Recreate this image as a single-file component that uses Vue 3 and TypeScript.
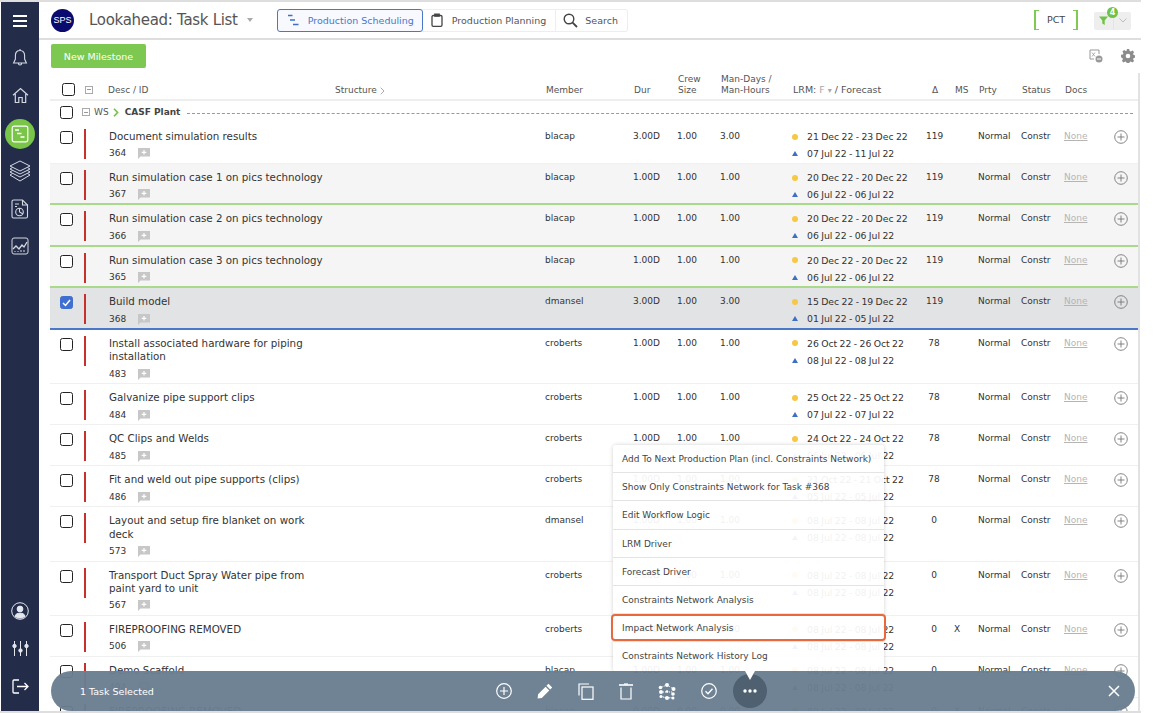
<script setup lang="ts">
interface Task {
  title: string
  id: number
  member: string
  dur: string
  crew: string
  man: string
  lrm: string
  fc: string
  delta: number
  ms?: string
  tone?: 'soft' | 'picked'
}

const tasks: Task[] = [
  { title: 'Document simulation results', id: 364, member: 'blacap', dur: '3.00D', crew: '1.00', man: '3.00', lrm: '21 Dec 22 - 23 Dec 22', fc: '07 Jul 22 - 11 Jul 22', delta: 119 },
  { title: 'Run simulation case 1 on pics technology', id: 367, member: 'blacap', dur: '1.00D', crew: '1.00', man: '1.00', lrm: '20 Dec 22 - 20 Dec 22', fc: '06 Jul 22 - 06 Jul 22', delta: 119, tone: 'soft' },
  { title: 'Run simulation case 2 on pics technology', id: 366, member: 'blacap', dur: '1.00D', crew: '1.00', man: '1.00', lrm: '20 Dec 22 - 20 Dec 22', fc: '06 Jul 22 - 06 Jul 22', delta: 119, tone: 'soft' },
  { title: 'Run simulation case 3 on pics technology', id: 365, member: 'blacap', dur: '1.00D', crew: '1.00', man: '1.00', lrm: '20 Dec 22 - 20 Dec 22', fc: '06 Jul 22 - 06 Jul 22', delta: 119, tone: 'soft' },
  { title: 'Build model', id: 368, member: 'dmansel', dur: '3.00D', crew: '1.00', man: '3.00', lrm: '15 Dec 22 - 19 Dec 22', fc: '01 Jul 22 - 05 Jul 22', delta: 119, tone: 'picked' },
  { title: 'Install associated hardware for piping installation', id: 483, member: 'croberts', dur: '1.00D', crew: '1.00', man: '1.00', lrm: '26 Oct 22 - 26 Oct 22', fc: '08 Jul 22 - 08 Jul 22', delta: 78 },
  { title: 'Galvanize pipe support clips', id: 484, member: 'croberts', dur: '1.00D', crew: '1.00', man: '1.00', lrm: '25 Oct 22 - 25 Oct 22', fc: '07 Jul 22 - 07 Jul 22', delta: 78 },
  { title: 'QC Clips and Welds', id: 485, member: 'croberts', dur: '1.00D', crew: '1.00', man: '1.00', lrm: '24 Oct 22 - 24 Oct 22', fc: '06 Jul 22 - 06 Jul 22', delta: 78 },
  { title: 'Fit and weld out pipe supports (clips)', id: 486, member: 'croberts', dur: '1.00D', crew: '1.00', man: '1.00', lrm: '21 Oct 22 - 21 Oct 22', fc: '05 Jul 22 - 05 Jul 22', delta: 78 },
  { title: 'Layout and setup fire blanket on work deck', id: 573, member: 'dmansel', dur: '1.00D', crew: '1.00', man: '1.00', lrm: '08 Jul 22 - 08 Jul 22', fc: '08 Jul 22 - 08 Jul 22', delta: 0 },
  { title: 'Transport Duct Spray Water pipe from paint yard to unit', id: 567, member: 'croberts', dur: '1.00D', crew: '1.00', man: '1.00', lrm: '08 Jul 22 - 08 Jul 22', fc: '08 Jul 22 - 08 Jul 22', delta: 0 },
  { title: 'FIREPROOFING REMOVED', id: 506, member: 'croberts', dur: '1.00D', crew: '1.00', man: '1.00', lrm: '08 Jul 22 - 08 Jul 22', fc: '08 Jul 22 - 08 Jul 22', delta: 0, ms: 'X' },
  { title: 'Demo Scaffold', id: 494, member: 'blacap', dur: '1.00D', crew: '1.00', man: '1.00', lrm: '08 Jul 22 - 08 Jul 22', fc: '08 Jul 22 - 08 Jul 22', delta: 0 },
  { title: 'FIREPROOFING REMOVED', id: 507, member: 'blacap', dur: '0.00D', crew: '0.00', man: '0.00', lrm: '08 Jul 22 - 08 Jul 22', fc: '08 Jul 22 - 08 Jul 22', delta: 0, ms: 'X' }
]

const menuItems = [
  'Add To Next Production Plan (incl. Constraints Network)',
  'Show Only Constraints Network for Task #368',
  'Edit Workflow Logic',
  'LRM Driver',
  'Forecast Driver',
  'Constraints Network Analysis',
  'Impact Network Analysis',
  'Constraints Network History Log'
]
</script>

<template>
  <div class="page">
    <aside class="sidebar">
      <div class="side-item">
        <svg width="16" height="14" viewBox="0 0 16 14" fill="none" stroke="#fff" stroke-width="2"><path d="M1 2h14M1 7h14M1 12h14" /></svg>
      </div>
      <div class="side-item">
        <svg width="16" height="20" viewBox="0 0 16 20" fill="none" stroke="#d5d9e2" stroke-width="1.1"><path d="M8 2.500c-3 0-4.600 2.200-4.600 5v3.600L1.600 15h12.800l-1.800-3.900V7.500c0-2.800-1.600-5-4.600-5zM8 1v1.500M6.400 15.500c0 2 3.200 2 3.200 0" /></svg>
      </div>
      <div class="side-item">
        <svg width="17" height="17" viewBox="0 0 17 17" fill="none" stroke="#d5d9e2" stroke-width="1.200"><path d="M1 8.200 8.500 1.500 16 8.200M3.300 7v8.500h3.500v-5h3.400v5h3.500V7" /></svg>
      </div>
      <div class="side-item">
        <span class="side-active">
          <svg width="18" height="18" viewBox="0 0 18 18" fill="none" stroke="#fff"><rect x="1.200" y="1.200" width="15.600" height="15.600" rx="2" stroke-width="1.200" /><path d="M4 5h4M6 8.500h4.500M9.500 12h4" stroke-width="1.700" /></svg>
        </span>
      </div>
      <div class="side-item">
        <svg width="22" height="23" viewBox="0 0 22 23" fill="none" stroke="#d5d9e2" stroke-width="1"><path d="M11 1 21 6l-10 5L1 6zM3.500 7.500 1 9l10 5 10-5-2.500-1.500M3.500 10.500 1 12l10 5 10-5-2.500-1.500M3.500 13.500 1 15l10 6 10-6-2.500-1.500" /></svg>
      </div>
      <div class="side-item">
        <svg width="18" height="20" viewBox="0 0 18 20" fill="none" stroke="#d5d9e2" stroke-width="1.100"><path d="M2.500 1h9l5 5v11.500a1.500 1.500 0 0 1-1.500 1.500H2.500A1.500 1.500 0 0 1 1 17.500V2.500A1.500 1.500 0 0 1 2.500 1z" /><path d="M11.500 1v5h5M4 5h4M4 7.500h2" /><circle cx="8.500" cy="13" r="3.800" /><path d="M8.500 13V9.200M8.500 13l3.200 1.800" /></svg>
      </div>
      <div class="side-item">
        <svg width="18" height="18" viewBox="0 0 18 18" fill="none" stroke="#d5d9e2" stroke-width="1"><rect x="1" y="1" width="16" height="16" rx="2" /><path d="M2 12l3-3 3 3 3-4 2 2 3-5" stroke-width="1.300" /><path d="M4 15v-1M7 15v-1M10 15v-2M13 15v-2" /></svg>
      </div>
      <div class="side-spacer"></div>
      <div class="side-item">
        <svg width="18" height="18" viewBox="0 0 18 18" fill="none" stroke="#e4e7ee" stroke-width="1"><circle cx="9" cy="9" r="8.300" /><circle cx="9" cy="7" r="2.900" fill="#e4e7ee" /><path d="M4 14.200c.5-2.500 3-3 5-3s4.500.5 5 3c-1.500 1.300-3 1.800-5 1.800s-3.500-.5-5-1.800z" fill="#e4e7ee" /></svg>
      </div>
      <div class="side-item">
        <svg width="17" height="17" viewBox="0 0 17 17" fill="none" stroke="#e4e7ee" stroke-width="1"><path d="M2.500 1v15M8.500 1v15M14.500 1v15" /><circle cx="2.500" cy="6" r="1.700" fill="#e4e7ee" /><circle cx="8.500" cy="10.500" r="1.700" fill="#e4e7ee" /><circle cx="14.500" cy="6" r="1.700" fill="#e4e7ee" /></svg>
      </div>
      <div class="side-item">
        <svg width="17" height="15" viewBox="0 0 17 15" fill="none" stroke="#fff" stroke-width="1.300"><path d="M7 1H2a1 1 0 0 0-1 1v11a1 1 0 0 0 1 1h5M5 7.500h11M12.500 4l3.500 3.500-3.500 3.500" /></svg>
      </div>
    </aside>

    <main class="main">
      <header class="topbar">
        <span class="logo">SPS</span>
        <h1 class="page-title">Lookahead: Task List</h1>
        <span class="title-caret"></span>
        <nav class="tabs">
          <div class="tab active">
            <svg width="12" height="12" viewBox="0 0 12 12" fill="none" stroke="#3f6fc4" stroke-width="1.400"><path d="M1 1.500h4.500M3 6h5M6 10.500h5.500" /></svg>
            <span>Production Scheduling</span>
          </div>
          <div class="tab">
            <svg width="12" height="14" viewBox="0 0 12 14" fill="none" stroke="#444" stroke-width="1.300"><rect x="1" y="2.500" width="10" height="10.800" rx="1.200" /><path d="M3.800 3.200V1.200h4.400v2z" fill="#444" /></svg>
            <span>Production Planning</span>
          </div>
          <div class="tab">
            <svg width="15" height="15" viewBox="0 0 15 15" fill="none" stroke="#444" stroke-width="1.400"><circle cx="6" cy="6" r="4.800" /><path d="M9.600 9.600 14 14" stroke-width="1.800" /></svg>
            <span>Search</span>
          </div>
        </nav>
        <div class="top-right">
          <div class="pct">PCT</div>
          <div class="filter-btn">
            <svg width="9" height="9" viewBox="0 0 9 9" fill="#6fc243"><path d="M0 .5h9L5.700 4.500V9L3.300 7.600V4.500z" /></svg>
            <span class="filter-badge">4</span>
            <span class="filter-sep"></span>
            <svg width="8" height="5" viewBox="0 0 8 5" fill="none" stroke="#bdbdbd"><path d="M.5.5 4 4 7.500.5" /></svg>
          </div>
        </div>
      </header>

      <div class="actions">
        <button class="milestone">New Milestone</button>
        <div class="action-icons">
          <svg width="14" height="14" viewBox="0 0 14 14" fill="none" stroke="#999" stroke-width="1"><path d="M10 5V1H1v9h4" /><path d="M3 3.500l3 4M6 3.500l-3 4" stroke-width=".8" /><circle cx="10" cy="10" r="3.500" fill="#999" stroke="none" /><path d="M8 10h4" stroke="#fff" /></svg>
          <svg width="14" height="14" viewBox="0 0 14 14" fill="#8c8c8c"><path d="M5.800 0h2.400l.4 1.900 1.200.5 1.600-1 1.700 1.700-1 1.600.5 1.200 1.900.4v2.400l-1.900.4-.5 1.200 1 1.600-1.700 1.700-1.600-1-1.200.5-.4 1.900H5.800l-.4-1.900-1.200-.5-1.600 1-1.700-1.700 1-1.600-.5-1.200L0 8.200V5.800l1.900-.4.500-1.200-1-1.600 1.700-1.700 1.600 1 1.200-.5zM7 4.700a2.300 2.300 0 1 0 0 4.600 2.300 2.300 0 0 0 0-4.600z" /></svg>
        </div>
      </div>

      <section class="table">
        <div class="grid head">
          <div class="head-check"><span class="box"></span><span class="collapse"></span></div>
          <div></div>
          <div class="head-desc">Desc / ID</div>
          <div class="head-structure">Structure
            <svg width="5" height="8" viewBox="0 0 5 8" fill="none" stroke="#aaa"><path d="M.7.7 4 4 .7 7.300" /></svg>
          </div>
          <div>Member</div>
          <div>Dur</div>
          <div>Crew<br />Size</div>
          <div>Man-Days /<br />Man-Hours</div>
          <div class="head-lrm">LRM: <span class="muted">F</span> <span class="mini-caret">▾</span> / Forecast</div>
          <div class="delta">Δ</div>
          <div>MS</div>
          <div>Prty</div>
          <div>Status</div>
          <div>Docs</div>
          <div></div>
        </div>

        <div class="group">
          <span class="box"></span>
          <span class="collapse"></span>
          <span class="ws">WS</span>
          <svg width="6" height="9" viewBox="0 0 6 9" fill="none" stroke="#6fc243" stroke-width="1.600"><path d="M1 .8 4.600 4.500 1 8.200" /></svg>
          <b>CASF Plant</b>
          <span class="dash"></span>
        </div>

        <div v-for="task in tasks" :key="task.id" class="grid row" :class="task.tone">
          <div class="row-check">
            <span class="box" :class="{ checked: task.tone === 'picked' }">
              <svg v-if="task.tone === 'picked'" width="9" height="8" viewBox="0 0 9 8" fill="none" stroke="#fff" stroke-width="1.500"><path d="M1 4l2.500 2.500L8 1" /></svg>
            </span>
          </div>
          <div class="bar-cell"><span class="bar"></span></div>
          <div class="desc">
            <div class="desc-title">{{ task.title }}</div>
            <div class="desc-id">
              {{ task.id }}
              <svg width="12" height="11" viewBox="0 0 12 11"><path d="M0 0h12v8.500H2.500L0 11z" fill="#c7c7c7" /><path d="M6 2v4.600M3.700 4.300h4.600" stroke="#fff" stroke-width="1.200" /></svg>
            </div>
          </div>
          <div></div>
          <div>{{ task.member }}</div>
          <div>{{ task.dur }}</div>
          <div>{{ task.crew }}</div>
          <div>{{ task.man }}</div>
          <div class="dates">
            <div class="date-line"><span class="dot"></span>{{ task.lrm }}</div>
            <div class="date-line"><span class="tri"></span>{{ task.fc }}</div>
          </div>
          <div class="delta">{{ task.delta }}</div>
          <div>{{ task.ms }}</div>
          <div>Normal</div>
          <div>Constr</div>
          <div class="none">None</div>
          <div class="add">
            <svg width="14" height="14" viewBox="0 0 14 14" fill="none" stroke="#777" stroke-width=".9"><circle cx="7" cy="7" r="6.300" /><path d="M7 3.500v7M3.500 7h7" /></svg>
          </div>
        </div>
      </section>

      <div class="menu">
        <div v-for="item in menuItems" :key="item" class="menu-item" :class="{ hot: item === 'Impact Network Analysis' }">{{ item }}</div>
      </div>

      <div class="selection-bar">
        <span class="selected-label">1 Task Selected</span>
        <div class="bar-tools">
          <svg class="tool" width="16" height="16" viewBox="0 0 16 16" fill="none" stroke="#fff" stroke-width="1.200"><circle cx="8" cy="8" r="7.300" /><path d="M8 4v8M4 8h8" /></svg>
          <svg class="tool" width="16" height="16" viewBox="0 0 16 16" fill="#fff"><path d="M11.500.8l3.700 3.700-2 2-3.700-3.700zM8.600 3.700l3.700 3.700-7.500 7.500L.6 15.400l.5-4.200z" /></svg>
          <svg class="tool" width="16" height="17" viewBox="0 0 16 17" fill="none" stroke="#fff" stroke-width="1.200"><path d="M1 12.500V1h10" /><rect x="4" y="4" width="11" height="12.300" /></svg>
          <svg class="tool" width="14" height="17" viewBox="0 0 14 17" fill="none" stroke="#fff" stroke-width="1.200"><path d="M0 2h14" stroke-width="1.600" /><path d="M5 1h4" /><path d="M2 4.500V16h10V4.500" /></svg>
          <svg class="tool" width="18" height="17" viewBox="0 0 18 17" fill="#fff"><circle cx="9" cy="2" r="2" /><circle cx="2.500" cy="4.500" r="1.800" /><circle cx="15.500" cy="6" r="2" /><circle cx="3" cy="9" r="2" /><circle cx="9" cy="8.500" r="1.300" /><circle cx="15" cy="11" r="1.800" /><circle cx="9" cy="15" r="2" /><circle cx="3" cy="13.500" r="1.500" /><circle cx="15" cy="15" r="1.500" /><path d="M2.500 4.500 9 2M3 9h12M3 13.500 9 15h6M15.500 6 9 2" stroke="#fff" stroke-dasharray="1 1" /></svg>
          <svg class="tool" width="16" height="16" viewBox="0 0 16 16" fill="none" stroke="#fff" stroke-width="1.200"><circle cx="8" cy="8" r="7.300" /><path d="M4.500 8.200l2.500 2.500 4.500-5" stroke-width="1.400" /></svg>
          <span class="more-wrap">
            <span class="more">
              <svg width="14" height="4" viewBox="0 0 14 4" fill="#fff"><circle cx="2" cy="2" r="1.700" /><circle cx="7" cy="2" r="1.700" /><circle cx="12" cy="2" r="1.700" /></svg>
            </span>
            <span class="more-arrow"></span>
          </span>
        </div>
        <svg class="close" width="12" height="12" viewBox="0 0 12 12" fill="none" stroke="#fff" stroke-width="1.500"><path d="M1 1l10 10M11 1 1 11" /></svg>
      </div>
    </main>
  </div>
</template>

<style>
html,
body {
  margin: 0;
  background: #fff;
  overflow: hidden;
}
</style>

<style scoped>
.page {
  display: flex;
  width: 1141px;
  height: 713px;
  box-sizing: border-box;
  padding-left: 1px;
  border-top: 2px solid #dedede;
  border-bottom: 2px solid #dedede;
  overflow: hidden;
  font-family: "DejaVu Sans", Verdana, sans-serif;
  font-size: 9px;
  color: #333;
}

.sidebar {
  flex: 0 0 38px;
  display: flex;
  flex-direction: column;
  padding-bottom: 6px;
  box-sizing: border-box;
  background: #232c49;
}

.side-item {
  flex: 0 0 37.600px;
  display: flex;
  align-items: center;
  justify-content: center;
}

.side-spacer {
  flex: 1;
}

.side-active {
  display: flex;
  align-items: center;
  justify-content: center;
  width: 30px;
  height: 30px;
  border-radius: 50%;
  background: #78c548;
}

.main {
  position: relative;
  flex: 1;
  min-width: 0;
}

.topbar {
  display: flex;
  align-items: center;
  height: 36px;
  padding: 0 10px 0 12px;
  border-bottom: 2px solid #dedede;
}

.logo {
  flex: none;
  width: 23px;
  height: 23px;
  border-radius: 50%;
  background: #0b0b6f;
  color: #fff;
  font-family: "Liberation Sans", sans-serif;
  font-size: 9px;
  line-height: 23px;
  text-align: center;
}

.page-title {
  margin: 0 0 0 15px;
  font-size: 15px;
  font-weight: 400;
  color: #555;
  letter-spacing: -0.3px;
}

.title-caret {
  width: 0;
  height: 0;
  margin: 0 24px 0 9px;
  border-left: 3.500px solid transparent;
  border-right: 3.500px solid transparent;
  border-top: 4px solid #aaa;
}

.tabs {
  display: flex;
  height: 23px;
  border: 1px solid #eee;
  border-left: 0;
  border-radius: 3px;
  box-sizing: border-box;
  font-size: 9.500px;
}

.tab {
  display: flex;
  align-items: center;
  gap: 9px;
  padding: 0 9px 0 8px;
  color: #555;
  border-right: 1px solid #eee;
  white-space: nowrap;
}

.tab:last-child {
  gap: 7px;
  padding-left: 7px;
  border-right: 0;
}

.tab.active {
  margin: -1px 0;
  padding: 0 8px 0 9px;
  color: #4a78c8;
  background: #f7f9fe;
  border: 1px solid #4a78c8;
  border-radius: 3px;
}

.top-right {
  display: flex;
  align-items: center;
  margin-left: auto;
}

.pct {
  width: 44px;
  height: 20px;
  line-height: 20px;
  box-sizing: border-box;
  text-align: center;
  color: #444;
  border: solid #7fca54;
  border-width: 0 2px;
  font-size: 9.500px;
  background:
    linear-gradient(#7fca54, #7fca54) left top / 3px 1px no-repeat,
    linear-gradient(#7fca54, #7fca54) left bottom / 3px 1px no-repeat,
    linear-gradient(#7fca54, #7fca54) right top / 3px 1px no-repeat,
    linear-gradient(#7fca54, #7fca54) right bottom / 3px 1px no-repeat;
}

.filter-btn {
  position: relative;
  display: flex;
  align-items: center;
  gap: 5px;
  width: 37px;
  height: 18px;
  margin-left: 16px;
  margin-top: 1px;
  padding-left: 5px;
  box-sizing: border-box;
  background: #eee;
  border-radius: 2px;
}

.filter-badge {
  position: absolute;
  left: 13px;
  top: -5px;
  width: 11px;
  height: 11px;
  border-radius: 50%;
  background: #6fc243;
  color: #fff;
  font-size: 8px;
  font-weight: 700;
  line-height: 11px;
  text-align: center;
}

.filter-sep {
  width: 1px;
  height: 18px;
  background: #e4e4e4;
}

.actions {
  display: flex;
  align-items: center;
  justify-content: space-between;
  height: 24px;
  margin-top: 4px;
  padding: 0 6px 0 12px;
}

.milestone {
  width: 95px;
  height: 24px;
  padding: 0;
  border: 0;
  border-radius: 2px;
  background: #7cc850;
  color: #fff;
  font-family: inherit;
  font-size: 9.500px;
}

.action-icons {
  display: flex;
  gap: 18px;
}

.table {
  position: relative;
  margin: 5px 0 0 11px;
  border-right: 2px solid #e2e2e2;
  width: 1090px;
  box-sizing: border-box;
}

.grid {
  display: grid;
  grid-template-columns: 34px 25px 225px 211px 88px 44px 43px 70px 136px 28px 24px 43px 43px 50px 24px;
}

.head {
  align-items: end;
  height: 28px;
  padding-bottom: 3px;
  box-sizing: border-box;
  border-bottom: 2px solid #eee;
  color: #555;
  line-height: 11px;
}

.head > div {
  margin-left: 1px;
}

.head-check {
  display: flex;
  align-items: center;
  gap: 10px;
  padding-left: 11px;
}

.head-desc {
  margin-left: -1px !important;
}

.head-structure {
  display: flex;
  align-items: center;
  gap: 3px;
}

.head-lrm {
  white-space: nowrap;
  margin-left: 3px !important;
  font-size: 9.500px;
}

.muted {
  color: #aaa;
}

.mini-caret {
  font-size: 8px;
  color: #aaa;
}

.box {
  display: inline-flex;
  align-items: center;
  justify-content: center;
  flex: none;
  width: 11px;
  height: 11px;
  border: 1px solid #222;
  border-radius: 2.500px;
  background: #fff;
}

.box.checked {
  background: #3f6fd0;
  border-color: #3f6fd0;
}

.collapse {
  position: relative;
  flex: none;
  width: 6px;
  height: 6px;
  border: 1px solid #aaa;
}

.collapse::after {
  content: "";
  position: absolute;
  left: 1px;
  right: 1px;
  top: 2.500px;
  height: 1px;
  background: #999;
}

.group {
  display: flex;
  align-items: center;
  height: 22px;
  padding-left: 10px;
  gap: 4px;
  color: #555;
}

.group .collapse {
  margin-left: 5px;
}

.group b {
  margin-left: 2px;
  color: #444;
}

.dash {
  flex: 1;
  margin: 2px 5px 0 3px;
  border-top: 1px dashed #999;
}

.row {
  min-height: 41px;
  box-sizing: border-box;
  padding: 7px 0 2.700px;
  border-bottom: 1px solid #f0f0f0;
  line-height: 13px;
  background: #fff;
}

.row.soft {
  background: #f5f5f5;
}

.row.soft + .row.soft,
.row.soft:has(+ .row.soft),
.row.soft:has(+ .row.picked) {
  padding-bottom: 2.200px;
  border-bottom: 2px solid #a9d98a;
}

.row.picked {
  padding-bottom: 2.200px;
  background: #e2e3e5;
  border-bottom: 2px solid #4a78c8;
}

.row-check {
  padding-left: 10px;
}

.row-check .box {
  margin-top: 1px;
}

.bar-cell {
  display: flex;
}

.bar {
  width: 2px;
  height: 30px;
  margin-top: -1px;
  background: #c7302b;
}

.desc-title {
  width: 220px;
  font-size: 10.300px;
  line-height: 13.300px;
}

.desc-id {
  display: flex;
  align-items: center;
  gap: 12px;
  height: 13px;
  margin-top: 4px;
}

.dates {
  white-space: nowrap;
  word-spacing: -0.600px;
  font-size: 9.300px;
}

.date-line {
  display: flex;
  align-items: center;
  height: 13px;
  padding-left: 2px;
}

.date-line + .date-line {
  margin-top: 4px;
}

.dot {
  width: 6px;
  height: 6px;
  margin-right: 9px;
  border-radius: 50%;
  background: #f7c746;
}

.tri {
  width: 0;
  height: 0;
  margin-right: 9px;
  border-left: 3px solid transparent;
  border-right: 3px solid transparent;
  border-bottom: 5px solid #3f6fc4;
}

.delta {
  width: 16px;
  text-align: center;
}

.none {
  color: #b5b5b5;
  text-decoration: underline;
}

.add {
  display: flex;
}

.menu {
  position: absolute;
  left: 574px;
  top: 443px;
  width: 271px;
  background: rgba(255, 255, 255, 0.93);
  box-shadow: 0 0 4px rgba(0, 0, 0, 0.18);
  border-radius: 3px;
}

.menu-item {
  position: relative;
  height: 28.200px;
  box-sizing: border-box;
  padding-left: 9px;
  border-bottom: 1px solid #e4e4e4;
  color: #444;
  line-height: 28px;
  white-space: nowrap;
}

.menu-item:last-child {
  border-bottom: 0;
}

.menu-item.hot::after {
  content: "";
  position: absolute;
  left: -2px;
  right: -2px;
  top: 0;
  bottom: 0;
  border: 2px solid #e9683c;
  border-radius: 4px;
}

.selection-bar {
  position: absolute;
  left: 12px;
  bottom: 0;
  display: flex;
  align-items: center;
  width: 1084px;
  height: 40px;
  box-sizing: border-box;
  padding: 0 15px 0 29px;
  border-radius: 20px;
  background: rgba(106, 126, 145, 0.96);
  color: #fff;
  font-size: 9.500px;
}

.selected-label {
  flex: 0 0 416px;
}

.bar-tools {
  display: flex;
  align-items: center;
}

.tool {
  flex: none;
  margin-right: 25px;
}

.more-wrap {
  position: relative;
  display: flex;
}

.more {
  display: flex;
  align-items: center;
  justify-content: center;
  width: 34px;
  height: 34px;
  margin-left: -9px;
  border-radius: 50%;
  background: #4f6070;
}

.more-arrow {
  position: absolute;
  left: 3px;
  top: -3px;
  width: 0;
  height: 0;
  border-left: 5px solid transparent;
  border-right: 5px solid transparent;
  border-top: 9px solid #fff;
}

.close {
  margin-left: auto;
}
</style>
